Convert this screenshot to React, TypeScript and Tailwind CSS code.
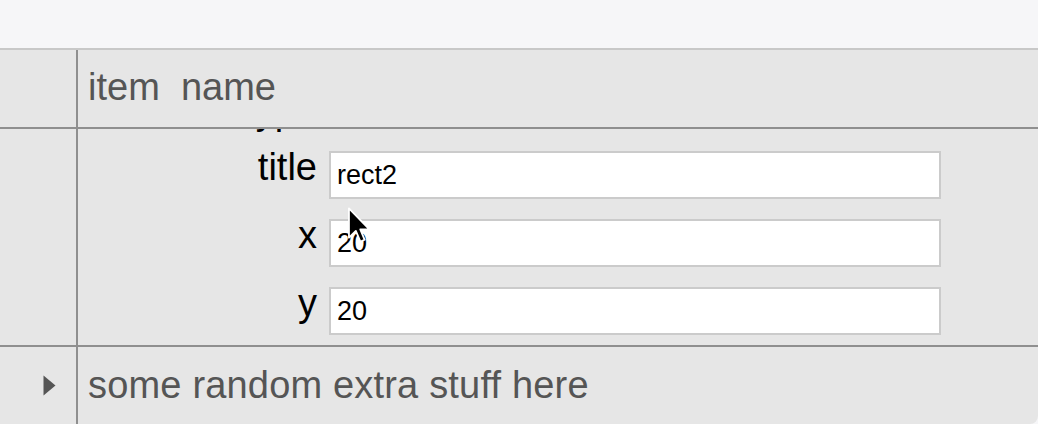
import React from "react";

const font = { fontFamily: '"Liberation Sans", Arial, Helvetica, sans-serif' };

function Field({ label, value }: { label: string; value: string }) {
  return (
    <div className="flex items-start h-[48px]">
      <div className="w-[239px] text-right text-[38px] leading-[44px] text-black mt-[-6px]">{label}</div>
      <div className="ml-[12px] w-[612px] h-[48px] bg-white border-2 border-[#cbcbcb] pl-[6px] flex items-center text-[27px] text-black">
        {value}
      </div>
    </div>
  );
}

export default function App() {
  return (
    <div className="w-[1038px] h-[424px] bg-[#f6f6f8] relative overflow-hidden" style={font}>
      <div className="h-[48px]" />
      <div className="h-[376px] border-t-2 border-[#c8c8c8] bg-[#e6e6e6] rounded-br-[8px] flex flex-col">
        <div className="h-[79px] flex shrink-0 border-b-2 border-[#8f8f8f]">
          <div className="w-[76px] shrink-0" />
          <div className="flex-1 border-l-2 border-[#8f8f8f] flex items-center pl-[10px] pb-[2px] text-[38px] text-[#555555] whitespace-pre">
            item  name
          </div>
        </div>
        <div className="h-[218px] flex shrink-0 border-b-2 border-[#8f8f8f]">
          <div className="w-[76px] shrink-0" />
          <div className="flex-1 border-l-2 border-[#8f8f8f] overflow-hidden">
            <div className="mt-[-40px] flex flex-col">
              <div className="w-[239px] text-right text-[38px] leading-[44px] text-black h-[44px]">type</div>
              <div className="mt-[18px] flex flex-col gap-[20px]">
                <Field label="title" value="rect2" />
                <Field label="x" value="20" />
                <Field label="y" value="20" />
              </div>
            </div>
          </div>
        </div>
        <div className="flex-1 flex">
          <div className="w-[76px] shrink-0 flex items-center pl-[43px]">
            <svg width="13" height="21" viewBox="0 0 13 21">
              <path d="M0.5 0.5 L12.5 10.5 L0.5 20.5 Z" fill="#555555" />
            </svg>
          </div>
          <div className="flex-1 border-l-2 border-[#8f8f8f] flex items-center pl-[10px] text-[38px] tracking-[0.18px] text-[#555555]">
            some random extra stuff here
          </div>
        </div>
      </div>
      <svg className="absolute left-[347px] top-[206px]" width="26" height="40" viewBox="0 0 20 30">
        <path
          d="M1.5 1.5 L1.5 24 L6.8 18.8 L10.3 27 L13.6 25.6 L10.2 17.6 L17.2 17.6 Z"
          fill="#000000"
          stroke="#ffffff"
          strokeWidth="1.4"
          strokeLinejoin="round"
        />
      </svg>
    </div>
  );
}
